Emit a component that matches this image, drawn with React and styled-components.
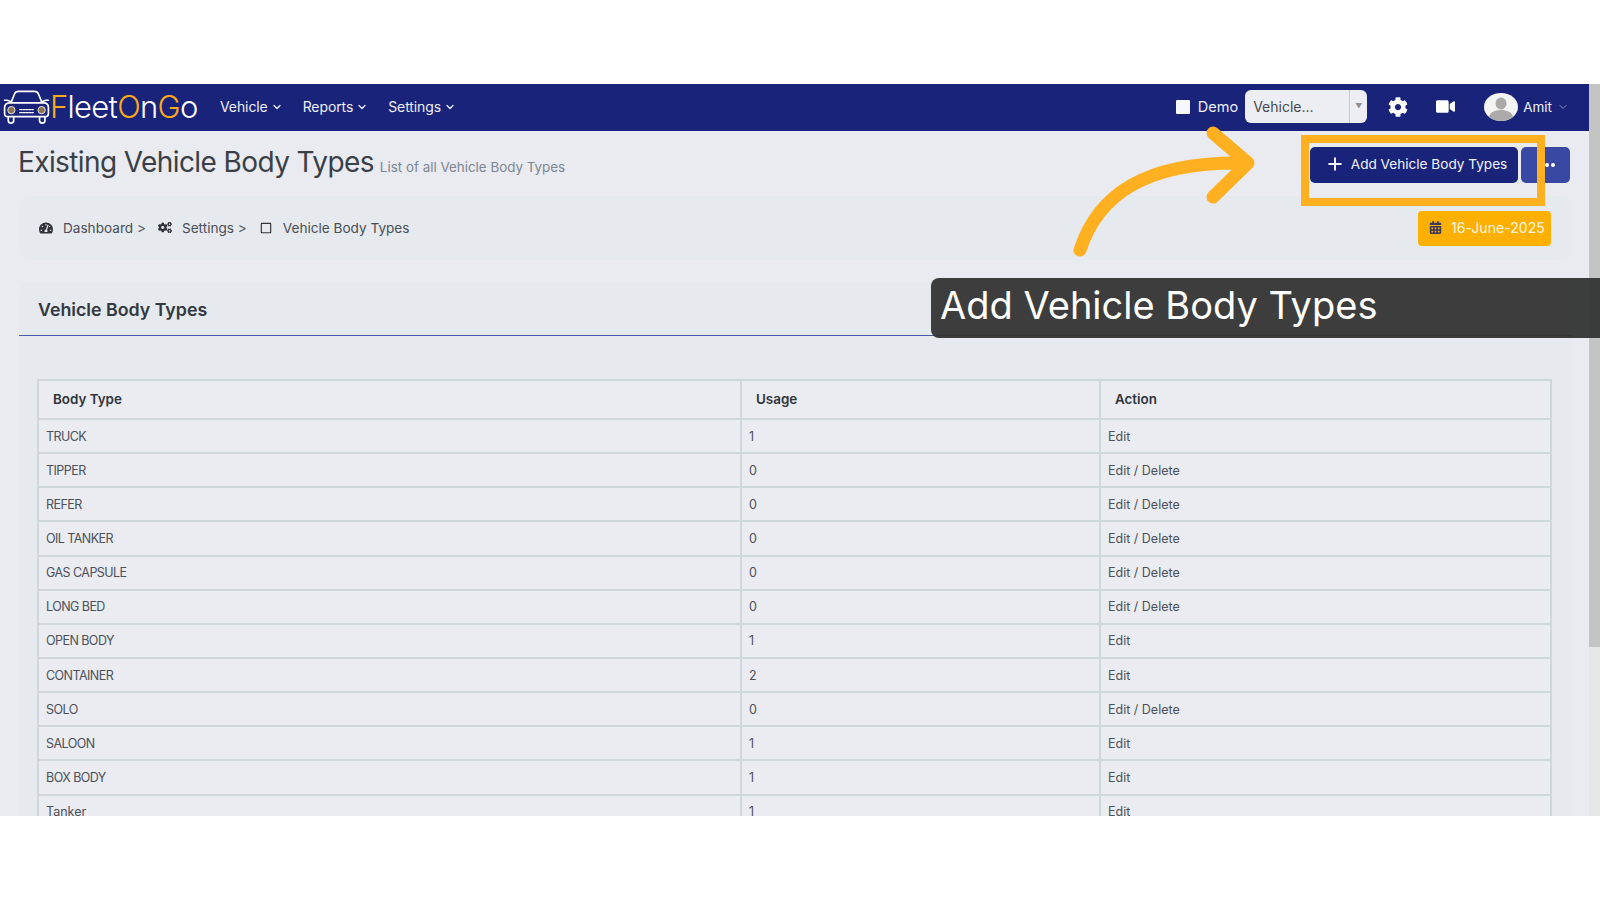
import React from 'react';
import styled, { createGlobalStyle } from 'styled-components';
import { ChevronDown, Plus } from 'lucide-react';
import {
  FaCalendarAlt,
  FaCog,
  FaCogs,
  FaRegSquare,
  FaTachometerAlt,
  FaVideo,
} from 'react-icons/fa';

const GlobalStyle = createGlobalStyle`
  html, body {
    margin: 0;
    height: 100%;
    background: #fff;
    overflow: hidden;
  }
  * { box-sizing: border-box; }
  body { font-family: Inter, "Noto Sans", sans-serif; }
`;

const Frame = styled.div`
  position: relative;
  width: 1600px;
  height: 900px;
  padding-top: 84px;
  background: #fff;
  overflow: hidden;
`;

const AppWindow = styled.div`
  display: flex;
  height: 732px;
  overflow: hidden;
  background: #e9ebf0;
`;

const Main = styled.div`
  flex: 1;
  min-width: 0;
`;

const Scrollbar = styled.div`
  width: 11px;
  background: #e6e6e8;
`;

const ScrollThumb = styled.div`
  height: 563px;
  background: #c4c4c4;
`;

const TopBar = styled.header`
  display: flex;
  align-items: center;
  height: 47px;
  padding-bottom: 2px;
  background: #19237a;
  color: #eef0f6;
`;

const Logo = styled.div`
  display: flex;
  align-items: center;
  width: 220px;
  padding-left: 2px;
`;

const LogoText = styled.span`
  margin-left: -1px;
  font-size: 31px;
  font-weight: 300;
  letter-spacing: -0.7px;
  color: #fff;
`;

const LogoAccent = styled.span`
  color: #fbab18;
`;

const NavLink = styled.a`
  display: flex;
  align-items: center;
  gap: 3px;
  margin-right: 20px;
  font-size: 14px;
  letter-spacing: -0.1px;
  color: #eef0f6;
`;

const TopRight = styled.div`
  display: flex;
  align-items: center;
  margin-left: auto;
  padding-right: 20px;
`;

const DemoBox = styled.span`
  width: 14px;
  height: 14px;
  margin-right: 8px;
  background: #f7f8fb;
  border-radius: 1px;
`;

const DemoLabel = styled.span`
  font-size: 14.5px;
  margin-right: 7px;
`;

const SelectBox = styled.div`
  display: flex;
  align-items: center;
  width: 122px;
  height: 33px;
  margin-right: 21px;
  background: #eceef3;
  border-radius: 6px;
  color: #454a52;
  font-size: 14px;
`;

const SelectValue = styled.span`
  flex: 1;
  padding-left: 8px;
`;

const SelectArrow = styled.span`
  display: flex;
  align-items: center;
  justify-content: center;
  width: 18px;
  height: 100%;
  border-left: 1px solid #c6c9cf;
  color: #8a8d93;
  font-size: 7px;
`;

const IconButton = styled.span`
  display: flex;
  margin-right: ${(p) => p.$gap}px;
  color: #fff;
`;

const Avatar = styled.svg`
  width: 34px;
  height: 28px;
  margin-right: 5px;
`;

const UserName = styled.span`
  font-size: 13.5px;
  margin-right: 5px;
`;

const Content = styled.div`
  padding: 0 17px 0 19px;
`;

const TitleRow = styled.div`
  display: flex;
  align-items: flex-start;
  justify-content: space-between;
  height: 65px;
  padding-right: 2px;
`;

const TitleGroup = styled.div`
  display: flex;
  align-items: baseline;
  gap: 6px;
  padding-top: 14px;
`;

const PageTitle = styled.h1`
  margin: 0 0 0 -1px;
  font-size: 28px;
  font-weight: 400;
  letter-spacing: -0.6px;
  color: #3a3f47;
`;

const PageSubtitle = styled.span`
  font-size: 13.4px;
  color: #7d8591;
`;

const TitleActions = styled.div`
  display: flex;
  gap: 3px;
  padding-top: 16px;
`;

const PrimaryButton = styled.button`
  display: flex;
  align-items: center;
  justify-content: center;
  gap: 6px;
  width: 208px;
  height: 36px;
  border: 0;
  border-radius: 5px;
  padding: 0 0 3px 4px;
  background: #19237a;
  color: #f2f3f8;
  font-family: inherit;
  font-size: 13.6px;
`;

const MoreButton = styled.button`
  display: flex;
  align-items: center;
  justify-content: center;
  gap: 2px;
  width: 49px;
  height: 36px;
  border: 0;
  border-radius: 5px;
  padding: 0 0 0 3px;
  background: #3949a3;
`;

const MoreDot = styled.span`
  width: 4px;
  height: 4px;
  border-radius: 50%;
  background: #fff;
`;

const Breadcrumbs = styled.nav`
  display: flex;
  align-items: center;
  height: 64px;
  padding: 0 21px 0 20px;
  border-radius: 10px;
  background: #e6e9ed;
  color: #494e57;
  font-size: 13.6px;
`;

const Crumb = styled.span`
  display: flex;
  align-items: center;
  gap: 10px;
  margin-right: 12px;
  padding-bottom: 1px;
`;

const CrumbIcon = styled.span`
  display: flex;
  justify-content: center;
  width: 14px;
  color: #2f333a;
`;

const DateBadge = styled.div`
  display: flex;
  align-items: center;
  gap: 9px;
  width: 133px;
  margin-left: auto;
  height: 35px;
  padding: 0 0 2px 11px;
  border-radius: 4px;
  background: #fdb000;
  color: #fdf5e2;
  font-size: 14px;
  letter-spacing: 0.05px;
`;

const DateIcon = styled.span`
  display: flex;
  color: #3b3a5c;
`;

const Card = styled.section`
  margin-top: 22px;
  border-radius: 12px 12px 0 0;
  background: #e6e9ed;
`;

const CardHeader = styled.div`
  display: flex;
  align-items: center;
  height: 54px;
  padding: 2px 0 0 19px;
  border-bottom: 1px solid #4a5aa8;
`;

const CardTitle = styled.h2`
  margin: 0;
  font-size: 17.8px;
  font-weight: 600;
  color: #343840;
`;

const CardBody = styled.div`
  padding: 43px 20px 0 18px;
`;

const Table = styled.table`
  width: 1513px;
  table-layout: fixed;
  border-collapse: collapse;
  background: #eaecf1;
  font-size: 12.5px;
  color: #4c5059;
`;

const Column = styled.col`
  width: ${(p) => p.$width}px;
`;

const HeadCell = styled.th`
  height: 39px;
  padding: 0 13px 2px 14px;
  border: 2px solid #cfd6dc;
  text-align: left;
  font-size: 13.4px;
  font-weight: 600;
  color: #30343b;
`;

const Cell = styled.td`
  height: 34.15px;
  padding: 0 7px;
  border: 2px solid #cfd6dc;
  letter-spacing: ${(p) => (p.$caps ? '-0.55px' : '0')};
`;

const rows = [
  ['TRUCK', 1, false],
  ['TIPPER', 0, true],
  ['REFER', 0, true],
  ['OIL TANKER', 0, true],
  ['GAS CAPSULE', 0, true],
  ['LONG BED', 0, true],
  ['OPEN BODY', 1, false],
  ['CONTAINER', 2, false],
  ['SOLO', 0, true],
  ['SALOON', 1, false],
  ['BOX BODY', 1, false],
  ['Tanker', 1, false],
];

const Highlight = styled.div`
  position: absolute;
  left: 1301px;
  top: 135px;
  width: 244px;
  height: 71px;
  border: 8px solid #ffb020;
`;

const ArrowDrawing = styled.svg`
  position: absolute;
  left: 1060px;
  top: 120px;
  width: 210px;
  height: 150px;
`;

const Callout = styled.div`
  position: absolute;
  left: 931px;
  top: 278px;
  width: 669px;
  height: 60px;
  padding-left: 9px;
  border-radius: 8px 0 0 8px;
  background: rgba(51, 52, 51, 0.95);
  color: #fff;
  font-size: 38px;
  line-height: 54px;
`;

function CarLogo() {
  return (
    <svg width="49" height="36" viewBox="0 0 47 34" fill="none">
      <g stroke="#fff" strokeWidth="1.6" strokeLinecap="round" strokeLinejoin="round">
        <path d="M9 12 12 4.5C12.6 2.8 14 2 16 2h15c2 0 3.4.8 4 2.5L38 12" />
        <path d="M7 13h33c2.6 0 4.5 1.8 4.5 4.5v6c0 1.8-1 2.8-2.8 2.8H5.3c-1.8 0-2.8-1-2.8-2.8v-6C2.500 14.800 4.400 13 7 13Z" />
        <path d="M6 26.500v3.500c0 1.600 1 2.500 2.600 2.500s2.600-.9 2.600-2.500v-3.500M36 26.500v3.500c0 1.600 1 2.500 2.600 2.500s2.600-.9 2.600-2.500v-3.500" />
        <path d="M9 12 5 10.500H2.500M38 12l4-1.500h2.500" />
        <path d="M17 19.500h13M17 22.500h13" strokeDasharray="2 1" strokeWidth="1.200" />
      </g>
      <circle cx="9" cy="20" r="3.500" fill="#8a7350" stroke="#fff" strokeWidth="0.800" />
      <circle cx="38" cy="20" r="3.500" fill="#8a7350" stroke="#fff" strokeWidth="0.800" />
    </svg>
  );
}

function AvatarIcon() {
  return (
    <Avatar viewBox="0 0 34 28">
      <ellipse cx="17" cy="14" rx="17" ry="14" fill="#f4f4f5" />
      <ellipse cx="17" cy="10.500" rx="5.500" ry="6" fill="#aca9a9" />
      <path d="M5 24c1-5 6-7 12-7s11 2 12 7c-3 2.600-7.500 4-12 4s-9-1.400-12-4Z" fill="#aca9a9" />
    </Avatar>
  );
}

export default function App() {
  return (
    <>
      <GlobalStyle />
      <Frame>
        <AppWindow>
          <Main>
            <TopBar>
              <Logo>
                <CarLogo />
                <LogoText>
                  <LogoAccent>F</LogoAccent>leet<LogoAccent>O</LogoAccent>n
                  <LogoAccent>G</LogoAccent>o
                </LogoText>
              </Logo>
              <NavLink>
                Vehicle <ChevronDown size={12} strokeWidth={2.5} />
              </NavLink>
              <NavLink>
                Reports <ChevronDown size={12} strokeWidth={2.5} />
              </NavLink>
              <NavLink>
                Settings <ChevronDown size={12} strokeWidth={2.5} />
              </NavLink>
              <TopRight>
                <DemoBox />
                <DemoLabel>Demo</DemoLabel>
                <SelectBox>
                  <SelectValue>Vehicle...</SelectValue>
                  <SelectArrow>▼</SelectArrow>
                </SelectBox>
                <IconButton $gap={28}>
                  <FaCog size={20} />
                </IconButton>
                <IconButton $gap={29}>
                  <FaVideo size={19} />
                </IconButton>
                <AvatarIcon />
                <UserName>Amit</UserName>
                <ChevronDown size={12} color="#8e93b8" />
              </TopRight>
            </TopBar>
            <Content>
              <TitleRow>
                <TitleGroup>
                  <PageTitle>Existing Vehicle Body Types</PageTitle>
                  <PageSubtitle>List of all Vehicle Body Types</PageSubtitle>
                </TitleGroup>
                <TitleActions>
                  <PrimaryButton>
                    <Plus size={20} strokeWidth={2.4} />
                    Add Vehicle Body Types
                  </PrimaryButton>
                  <MoreButton>
                    <MoreDot />
                    <MoreDot />
                    <MoreDot />
                  </MoreButton>
                </TitleActions>
              </TitleRow>
              <Breadcrumbs>
                <Crumb>
                  <CrumbIcon>
                    <FaTachometerAlt size={14} />
                  </CrumbIcon>
                  Dashboard &gt;
                </Crumb>
                <Crumb>
                  <CrumbIcon>
                    <FaCogs size={15} />
                  </CrumbIcon>
                  Settings &gt;
                </Crumb>
                <Crumb>
                  <CrumbIcon>
                    <FaRegSquare size={12} />
                  </CrumbIcon>
                  Vehicle Body Types
                </Crumb>
                <DateBadge>
                  <DateIcon>
                    <FaCalendarAlt size={13} />
                  </DateIcon>
                  16-June-2025
                </DateBadge>
              </Breadcrumbs>
              <Card>
                <CardHeader>
                  <CardTitle>Vehicle Body Types</CardTitle>
                </CardHeader>
                <CardBody>
                  <Table>
                    <colgroup>
                      <Column $width={703} />
                      <Column $width={359} />
                      <Column $width={451} />
                    </colgroup>
                    <thead>
                      <tr>
                        <HeadCell>Body Type</HeadCell>
                        <HeadCell>Usage</HeadCell>
                        <HeadCell>Action</HeadCell>
                      </tr>
                    </thead>
                    <tbody>
                      {rows.map(([name, usage, canDelete]) => (
                        <tr key={name}>
                          <Cell $caps={name === name.toUpperCase()}>{name}</Cell>
                          <Cell>{usage}</Cell>
                          <Cell>{canDelete ? 'Edit / Delete' : 'Edit'}</Cell>
                        </tr>
                      ))}
                    </tbody>
                  </Table>
                </CardBody>
              </Card>
            </Content>
          </Main>
          <Scrollbar>
            <ScrollThumb />
          </Scrollbar>
        </AppWindow>
        <Highlight />
        <ArrowDrawing viewBox="1060 120 210 150" fill="none">
          <g stroke="#ffb020" strokeWidth="13" strokeLinecap="round" strokeLinejoin="round">
            <path d="M1080 250C1098 195 1145 161 1245 163" />
            <path d="M1213 133 1248 163 1213 197" />
          </g>
        </ArrowDrawing>
        <Callout>Add Vehicle Body Types</Callout>
      </Frame>
    </>
  );
}
